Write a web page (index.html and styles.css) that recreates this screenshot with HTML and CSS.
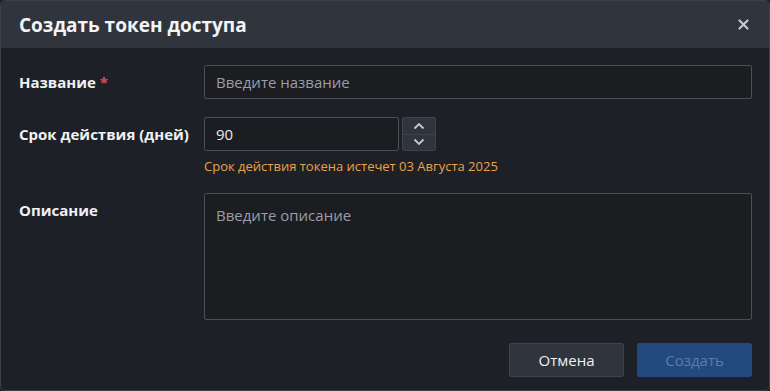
FILE: index.html
```html
<!DOCTYPE html>
<html lang="ru">
<head>
<meta charset="UTF-8" />
<title>Создать токен доступа</title>
<link rel="stylesheet" href="styles.css">
</head>
<body>

<div class="dialog">
  <div class="dialog-header">
    <h2>Создать токен доступа</h2>
    <button class="close" type="button" aria-label="Закрыть">
      <svg width="11" height="11" viewBox="0 0 11 11"><path d="M1.5 1.5 L9.5 9.5 M9.5 1.5 L1.5 9.5" stroke="#c4c7cd" stroke-width="2.2" stroke-linecap="round"/></svg>
    </button>
  </div>

  <form class="dialog-body">
    <div class="row">
      <label class="label" for="name">Название <span class="req">*</span></label>
      <div class="field">
        <input type="text" id="name" placeholder="Введите название" />
      </div>
    </div>

    <div class="row">
      <label class="label" for="days">Срок действия (дней)</label>
      <div class="field">
        <div class="number">
          <input type="text" id="days" value="90" />
          <div class="spin">
            <button type="button">
              <svg width="12" height="8" viewBox="0 0 12 8"><path d="M1.5 6.5 L6 2 L10.5 6.5" fill="none" stroke="#c4c7cd" stroke-width="1.8"/></svg>
            </button>
            <button type="button">
              <svg width="12" height="8" viewBox="0 0 12 8"><path d="M1.5 1.5 L6 6 L10.5 1.5" fill="none" stroke="#c4c7cd" stroke-width="1.8"/></svg>
            </button>
          </div>
        </div>
        <div class="hint">Срок действия токена истечет 03 Августа 2025</div>
      </div>
    </div>

    <div class="row">
      <label class="label" for="desc">Описание</label>
      <div class="field">
        <textarea id="desc" placeholder="Введите описание"></textarea>
      </div>
    </div>

    <div class="actions">
      <button type="button" class="btn btn-cancel">Отмена</button>
      <button type="submit" class="btn btn-primary" disabled>Создать</button>
    </div>
  </form>
</div>

</body>
</html>
```

FILE: styles.css
```css
body {
  margin: 0;
  font-family: 'Open Sans', 'Noto Sans', sans-serif;
  background: #1d2027;
  color: #f0f1f3;
}

.dialog {
  box-sizing: border-box;
  width: 770px;
  height: 391px;
  border: 1px solid #3b3f47;
  border-radius: 5px;
  background: #1d2027;
  overflow: hidden;
}

.dialog-header {
  height: 47px;
  background: #30343d;
  display: flex;
  align-items: center;
  justify-content: space-between;
  padding: 0 20px 0 18px;
}

.dialog-header h2 {
  margin: 0;
  font-size: 19px;
  font-weight: 700;
  color: #f3f4f6;
}

.close {
  background: none;
  border: none;
  padding: 0;
  display: flex;
  cursor: pointer;
}

.dialog-body {
  padding: 17px 17px 0 18px;
}

.row {
  display: flex;
  margin-bottom: 18px;
}

.label {
  width: 185px;
  flex: none;
  font-size: 15px;
  font-weight: 700;
  line-height: 34px;
  color: #f0f1f3;
}

.req {
  color: #e5484d;
}

.field {
  flex: 1;
}

input, textarea {
  box-sizing: border-box;
  width: 100%;
  height: 34px;
  padding: 0 11px;
  background: #1b1d21;
  border: 1px solid #4c4f56;
  border-radius: 2px;
  font-family: inherit;
  font-size: 15px;
  color: #e8e9eb;
  outline: none;
}

input::placeholder, textarea::placeholder {
  color: #9a9ea6;
}

.number {
  display: flex;
  gap: 3px;
}

.number input {
  width: 195px;
}

.spin {
  display: flex;
  flex-direction: column;
  width: 34px;
  height: 34px;
  border: 1px solid #3e424a;
  border-radius: 2px;
  background: #30343d;
  box-sizing: border-box;
}

.spin button {
  flex: 1;
  background: none;
  border: none;
  padding: 0;
  display: flex;
  align-items: center;
  justify-content: center;
  cursor: pointer;
}

.spin button + button {
  border-top: 1px solid #3e424a;
}

.hint {
  margin-top: 6px;
  font-size: 13px;
  color: #eba24a;
}

textarea {
  height: 127px;
  padding: 11px 11px;
  resize: none;
}

.actions {
  display: flex;
  justify-content: flex-end;
  gap: 13px;
  margin-top: 1px;
}

.btn {
  width: 115px;
  height: 34px;
  border-radius: 2px;
  font-family: inherit;
  font-size: 15px;
  cursor: pointer;
}

.btn-cancel {
  background: #30343d;
  border: 1px solid #3e424a;
  color: #f0f1f3;
}

.btn-primary {
  background: #234a7f;
  border: 1px solid #234a7f;
  color: #5d7ca6;
  cursor: default;
}
```
